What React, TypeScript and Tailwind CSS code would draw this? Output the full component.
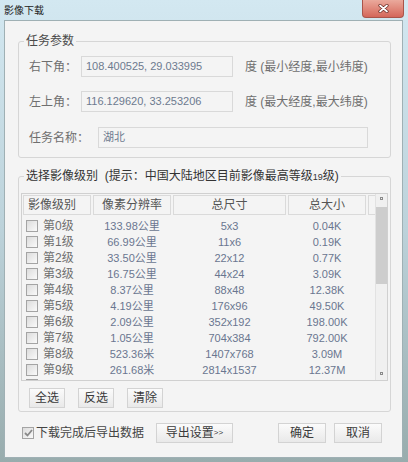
import React from 'react';

const rows = [
  ['第0级', '133.98公里', '5x3', '0.04K'],
  ['第1级', '66.99公里', '11x6', '0.19K'],
  ['第2级', '33.50公里', '22x12', '0.77K'],
  ['第3级', '16.75公里', '44x24', '3.09K'],
  ['第4级', '8.37公里', '88x48', '12.38K'],
  ['第5级', '4.19公里', '176x96', '49.50K'],
  ['第6级', '2.09公里', '352x192', '198.00K'],
  ['第7级', '1.05公里', '704x384', '792.00K'],
  ['第8级', '523.36米', '1407x768', '3.09M'],
  ['第9级', '261.68米', '2814x1537', '12.37M'],
];

const Box = () => (
  <div className="w-[12px] h-[12px] shrink-0 border border-[#a4a4a4] bg-gradient-to-br from-[#dcdcdc] to-[#fafafa]" />
);

const Btn = ({ label, w, children }: { label: string; w: string; children?: React.ReactNode }) => (
  <div
    className={`${w} h-[20px] flex items-center justify-center border border-[#d3d3d3] bg-gradient-to-b from-[#fbfbfb] to-[#e9e9e9] text-[12px] text-[#3a3a3a]`}
  >
    {label}
    {children}
  </div>
);

const Field = ({ w, value }: { w: string; value: string }) => (
  <div className={`${w} h-[21px] flex items-center pl-[4px] border border-[#d9d9d9] bg-[#f4f4f4] text-[11px] text-[#6d7a8f]`}>
    {value}
  </div>
);

export default function App() {
  return (
    <div className="w-[408px] h-[462px] flex flex-col bg-gradient-to-b from-[#d3e8f1] via-[#bcd2da] to-[#98acad] font-['Liberation_Sans','Noto_Sans_CJK_SC',sans-serif] select-none">
      {/* title bar */}
      <div className="h-[20px] flex items-start shrink-0">
        <span className="pl-[4px] pt-[5px] text-[10px] leading-[12px] text-[#222]">影像下载</span>
        <div className="ml-auto mr-[4px] w-[42px] h-[18px] flex items-center justify-center rounded-b-[4px] border border-t-0 border-[#a9544a] bg-gradient-to-b from-[#eaa99c] to-[#d4665a]">
          <svg width="11" height="9" viewBox="0 0 11 9">
            <path d="M2 1.5 L9 7.5 M9 1.5 L2 7.5" stroke="#6b2a24" strokeWidth="3.2" strokeLinecap="round" />
            <path d="M2 1.5 L9 7.5 M9 1.5 L2 7.5" stroke="#ffffff" strokeWidth="1.7" strokeLinecap="round" />
          </svg>
        </div>
      </div>

      {/* client area */}
      <div className="flex-1 ml-[4px] mr-[5px] mb-[4px] flex flex-col bg-[#f4f4f4] border border-[#9fb0b4] text-[12px] text-[#6f6f6f]">
        <fieldset className="mt-[12px] ml-[13px] mr-[11px] pb-[9px] border border-[#d6d6d6] rounded-[3px]">
          <legend className="ml-[5px] px-[2px] leading-[16px] text-[12px] text-[#4a4a4a]">任务参数</legend>
          <div className="pt-[7px] pl-[10px] flex flex-col gap-[14px]">
            <div className="flex items-center h-[21px]">
              <span className="w-[52px]">右下角：</span>
              <Field w="w-[152px]" value="108.400525, 29.033995" />
              <span className="ml-[12px]">度 (最小经度,最小纬度)</span>
            </div>
            <div className="flex items-center h-[21px]">
              <span className="w-[52px]">左上角：</span>
              <Field w="w-[152px]" value="116.129620, 33.253206" />
              <span className="ml-[12px]">度 (最大经度,最大纬度)</span>
            </div>
            <div className="flex items-center h-[21px] mt-[1px]">
              <span className="w-[69px]">任务名称：</span>
              <Field w="w-[270px]" value="湖北" />
            </div>
          </div>
        </fieldset>

        <fieldset className="mt-[10px] ml-[13px] mr-[11px] pb-[3px] border border-[#d6d6d6] rounded-[3px]">
          <legend className="ml-[5px] px-[2px] leading-[16px] text-[12px] text-[#333]">
            选择影像级别 &nbsp;(提示：中国大陆地区目前影像最高等级<span className="text-[9px]">19</span>级)
          </legend>
          <div className="mt-[8px] ml-[2px] mr-[2px] h-[188px] flex border border-[#d0d0d0] bg-[#f4f4f4]">
            <div className="flex-1 flex flex-col overflow-hidden pl-[1px] pt-[1px]">
              <div className="flex gap-[2px] h-[20px] shrink-0 text-[12px] text-[#555]">
                <div className="w-[68px] pl-[4px] flex items-center border border-[#dadada]">影像级别</div>
                <div className="w-[78px] flex items-center justify-center border border-[#dadada]">像素分辨率</div>
                <div className="w-[113px] flex items-center justify-center border border-[#dadada]">总尺寸</div>
                <div className="w-[78px] flex items-center justify-center border border-[#dadada]">总大小</div>
                <div className="flex-1 border border-r-0 border-[#dadada]" />
              </div>
              <div className="mt-[3px] flex flex-col">
                {rows.map((r) => (
                  <div key={r[0]} className="h-[16px] shrink-0 flex items-center">
                    <div className="w-[68px] flex items-center pl-[3px] gap-[5px] text-[#6f6f6f] text-[12px]">
                      <Box />
                      <span>{r[0]}</span>
                    </div>
                    <div className="ml-[2px] w-[78px] text-center text-[11px] text-[#6a7690]">{r[1]}</div>
                    <div className="ml-[2px] w-[113px] text-center text-[11px] text-[#6a7690]">{r[2]}</div>
                    <div className="ml-[2px] w-[78px] text-center text-[11px] text-[#6a7690]">{r[3]}</div>
                  </div>
                ))}
                {/* next row, just peeking above the bottom edge */}
                <div className="h-[16px] shrink-0 flex items-start pt-[1px] pl-[3px]">
                  <Box />
                </div>
              </div>
            </div>
            {/* scrollbar */}
            <div className="w-[12px] flex flex-col items-center bg-[#f0f0f0] border-l border-[#e2e2e2]">
              <div className="mt-[3px] w-[3px] h-[3px] border border-[#8a8a8a]" />
              <div className="mt-[7px] w-full h-[77px] bg-[#cdcdcd]" />
              <div className="mt-auto mb-[5px] w-[3px] h-[3px] border border-[#8a8a8a]" />
            </div>
          </div>
          <div className="mt-[7px] pl-[10px] flex gap-[13px]">
            <Btn label="全选" w="w-[36px]" />
            <Btn label="反选" w="w-[36px]" />
            <Btn label="清除" w="w-[36px]" />
          </div>
        </fieldset>

        <div className="mt-[11px] pl-[17px] pr-[20px] flex items-center">
          <div className="w-[12px] h-[12px] flex items-center justify-center border border-[#a4a4a4] bg-gradient-to-br from-[#dcdcdc] to-[#fafafa]">
            <svg width="9" height="8" viewBox="0 0 9 8">
              <path d="M1 4 L3.5 6.5 L8 1" stroke="#8a8a8a" strokeWidth="1.8" fill="none" />
            </svg>
          </div>
          <span className="ml-[2px] text-[12px] text-[#444]">下载完成后导出数据</span>
          <div className="ml-[12px]">
            <Btn label="导出设置" w="w-[77px]">
              <span className="text-[8px] leading-none">&gt;&gt;</span>
            </Btn>
          </div>
          <div className="ml-auto flex gap-[8px]">
            <Btn label="确定" w="w-[48px]" />
            <Btn label="取消" w="w-[48px]" />
          </div>
        </div>
      </div>
    </div>
  );
}
